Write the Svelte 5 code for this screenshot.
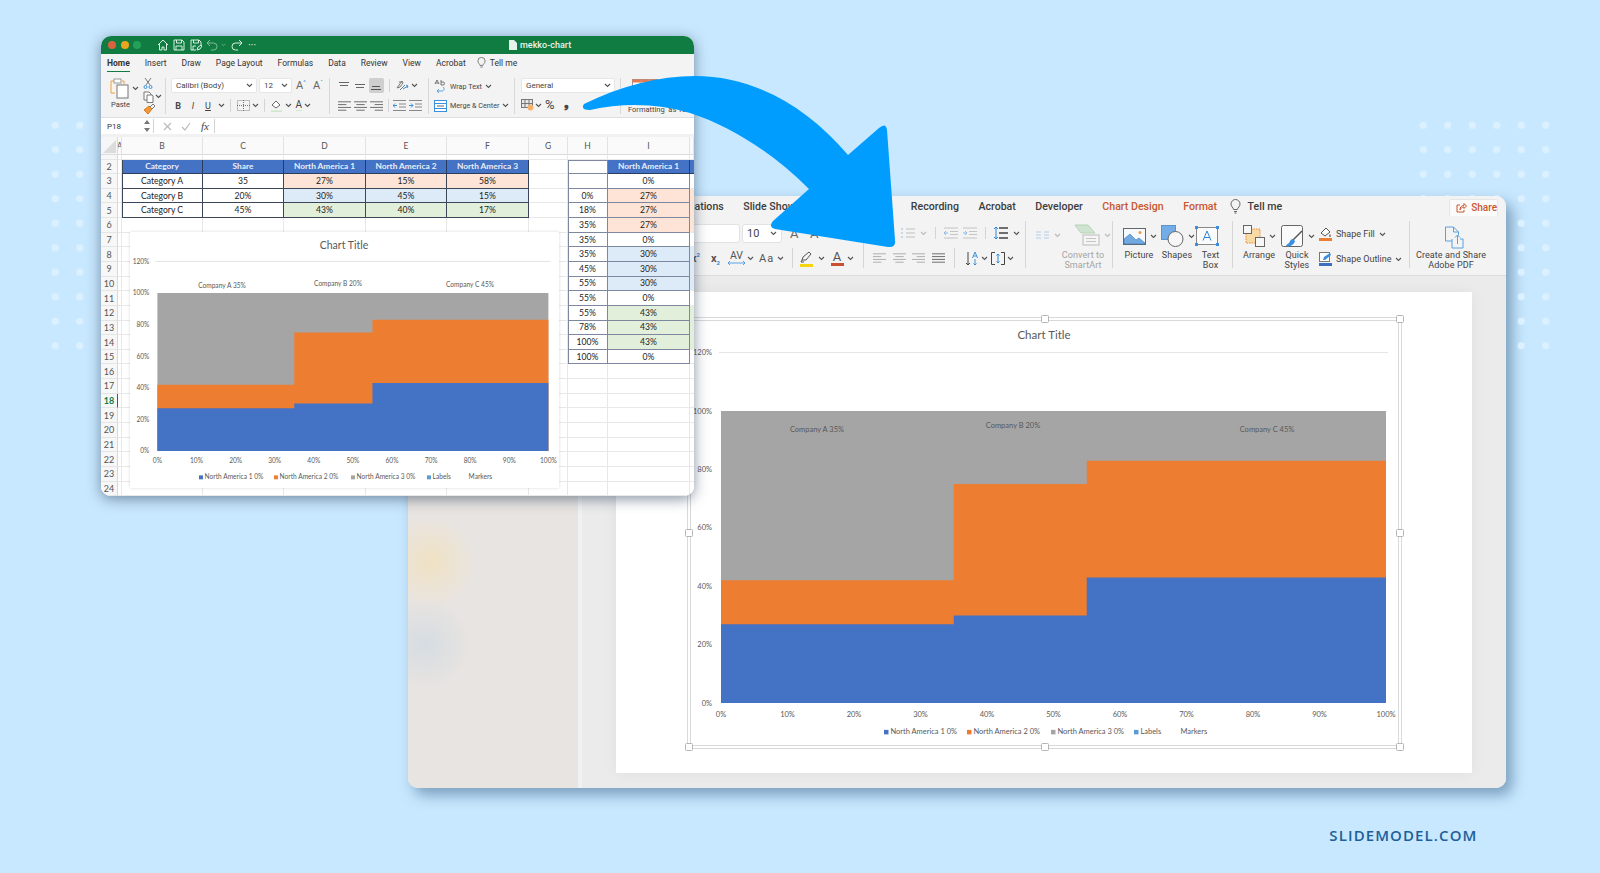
<script>
	const columns = ['A', 'B', 'C', 'D', 'E', 'F', 'G', 'H', 'I', ''];
	const head = ['North America 1', 'North America 2', 'North America 3'];

	// cells B..I for rows 2-15, [text, kind]
	const table = {
		2: [['Category', 'h'], ['Share', 'h'], [head[0], 'h'], [head[1], 'h'], [head[2], 'h'], 0, ['', 'r top'], [head[0], 'h']],
		3: [['Category A', 't'], ['35', 't'], ['27%', 't p'], ['15%', 't p'], ['58%', 't p'], 0, ['', 'r'], ['0%', 'r']],
		4: [['Category B', 't'], ['20%', 't'], ['30%', 't b'], ['45%', 't b'], ['15%', 't b'], 0, ['0%', 'r'], ['27%', 'r p']],
		5: [['Category C', 't'], ['45%', 't'], ['43%', 't g'], ['40%', 't g'], ['17%', 't g'], 0, ['18%', 'r'], ['27%', 'r p']],
		6: [0, 0, 0, 0, 0, 0, ['35%', 'r'], ['27%', 'r p']],
		7: [0, 0, 0, 0, 0, 0, ['35%', 'r'], ['0%', 'r']],
		8: [0, 0, 0, 0, 0, 0, ['35%', 'r'], ['30%', 'r b']],
		9: [0, 0, 0, 0, 0, 0, ['45%', 'r'], ['30%', 'r b']],
		10: [0, 0, 0, 0, 0, 0, ['55%', 'r'], ['30%', 'r b']],
		11: [0, 0, 0, 0, 0, 0, ['55%', 'r'], ['0%', 'r']],
		12: [0, 0, 0, 0, 0, 0, ['55%', 'r'], ['43%', 'r g']],
		13: [0, 0, 0, 0, 0, 0, ['78%', 'r'], ['43%', 'r g']],
		14: [0, 0, 0, 0, 0, 0, ['100%', 'r'], ['43%', 'r g']],
		15: [0, 0, 0, 0, 0, 0, ['100%', 'r'], ['0%', 'r']]
	};
	const rowNumbers = Array.from({ length: 23 }, (_, i) => i + 2);
	const blank = [0, 0, 0, 0, 0, 0, 0, 0];

	const blue = [[0, 27], [35, 27], [35, 30], [55, 30], [55, 43], [100, 43]];
	const orange = [[0, 42], [35, 42], [35, 75], [55, 75], [55, 83], [100, 83]];
	const percents = [0, 10, 20, 30, 40, 50, 60, 70, 80, 90, 100];
	const yPercents = [0, 20, 40, 60, 80, 100, 120];

	const smallChart = {
		w: 429, h: 256, x: 27.4, y: 61, pw: 391, ph: 158, fs: 6.6, title: 10.5, titleX: 214, titleY: 17, gap: 8, axisY: 231, legendY: 247,
		labels: [['Company A 35%', 92, 56], ['Company B 20%', 208, 54], ['Company C 45%', 340, 55]],
		legend: [[69, 'North America 1 0%', '#4472c4'], [144, 'North America 2 0%', '#ed7d31'], [221, 'North America 3 0%', '#a5a5a5'], [297, 'Labels', '#5b9bd5'], [333, 'Markers', '']]
	};
	const largeChart = {
		w: 711, h: 428, x: 32, y: 92, pw: 665, ph: 292, fs: 7.5, title: 11.5, titleX: 355, titleY: 20, gap: 9, axisY: 398, legendY: 415,
		labels: [['Company A 35%', 128, 113], ['Company B 20%', 324, 109], ['Company C 45%', 578, 113]],
		legend: [[195, 'North America 1 0%', '#4472c4'], [278, 'North America 2 0%', '#ed7d31'], [362, 'North America 3 0%', '#a5a5a5'], [445, 'Labels', '#5b9bd5'], [485, 'Markers', '']]
	};

	function steps(points, c) {
		const toXY = ([p, v]) => `${c.x + (p / 100) * c.pw},${c.y + c.ph - (v / 100) * c.ph}`;
		return [[0, 0], ...points, [100, 0]].map(toXY).join(' ');
	}

	// the fill of column I bleeds past its right border up to the window edge
	function tailFill(n) {
		const kinds = table[n]?.[7]?.[1]?.split(' ') ?? [];
		return kinds.find((k) => ['h', 'p', 'b', 'g'].includes(k)) ?? '';
	}
</script>

{#snippet chev(color = '#555')}
	<svg class="chev" viewBox="0 0 7 5"><path d="M1 1l2.500 2.500L6 1" fill="none" stroke={color} stroke-width="1.100" /></svg>
{/snippet}

{#snippet lines(mode, color = '#666')}
	<svg class="lines" viewBox="0 0 14 12">
		{#each [1, 4, 7, 10] as y, i}
			{@const w = mode === 'j' || i % 2 === 0 ? 14 : 9}
			<rect x={mode === 'l' ? 0 : mode === 'r' ? 14 - w : (14 - w) / 2} {y} width={w} height="1" fill={color} />
		{/each}
	</svg>
{/snippet}

{#snippet mekko(c)}
	<svg class="mekko" width={c.w} height={c.h} viewBox="0 0 {c.w} {c.h}" font-family="Lato, sans-serif" fill="#595959">
		<text x={c.titleX} y={c.titleY} font-size={c.title} text-anchor="middle">Chart Title</text>
		<line x1={c.x - 2} x2={c.x + c.pw + 2} y1={c.y - c.ph * 0.2} y2={c.y - c.ph * 0.2} stroke="#e4e4e4" />
		<rect x={c.x} y={c.y} width={c.pw} height={c.ph} fill="#a5a5a5" />
		<polygon points={steps(orange, c)} fill="#ed7d31" />
		<polygon points={steps(blue, c)} fill="#4472c4" />
		{#each yPercents as p}
			<text x={c.x - c.gap} y={c.y + c.ph - (p / 100) * c.ph + c.fs * 0.35} font-size={c.fs} text-anchor="end">{p}%</text>
		{/each}
		{#each percents as p}
			<text x={c.x + (p / 100) * c.pw} y={c.axisY} font-size={c.fs} text-anchor="middle">{p}%</text>
		{/each}
		{#each c.labels as [label, x, y]}
			<text {x} {y} font-size={c.fs} text-anchor="middle">{label}</text>
		{/each}
		{#each c.legend as [x, label, color]}
			{#if color}<rect {x} y={c.legendY - c.fs * 0.55} width={c.fs * 0.6} height={c.fs * 0.6} fill={color} />{/if}
			<text x={x + c.fs * 0.85} y={c.legendY} font-size={c.fs}>{label}</text>
		{/each}
	</svg>
{/snippet}

<main class="stage">
	<div class="dots dots-left"></div>
	<div class="dots dots-right"></div>
	<div class="dots dots-far"></div>

	<section class="ppt">
		<nav class="ppt-tabs">
			<span>Home</span><span>Insert</span><span>Draw</span><span>Design</span><span>Transitions</span>
			<span>Animations</span><span>Slide Show</span><span>Review</span><span>View</span><span>Recording</span>
			<span>Acrobat</span><span>Developer</span><span class="accent">Chart Design</span><span class="accent">Format</span>
			<span class="tell">
				<svg width="11" height="15" viewBox="0 0 11 15"><path d="M3.600 10.500C3.300 8.600 1 7.600 1 5a4.500 4.500 0 0 1 9 0c0 2.600-2.300 3.600-2.600 5.500zM4 12.500h3M4.500 14h2" fill="none" stroke="#666" /></svg>
				Tell me
			</span>
			<button class="share">
				<svg width="11" height="11" viewBox="0 0 11 11"><path d="M4 3H1v7h7V8M4 8c0-3 1.500-4.500 4-4.500V1.500L10.500 4 8 6.500V5C6 5 5 6 4 8z" fill="none" stroke="#c9572f" /></svg>
				Share
			</button>
		</nav>

		<div class="ppt-tools">
			<div class="pg pg-font">
				<div class="pr first">
					<span class="box name"></span>
					<span class="box size">10 {@render chev()}</span>
					<span class="big-a">A</span><span class="big-a">A</span>
				</div>
				<div class="pr second">
					<span class="sc">x<sup>2</sup></span>
					<span class="sc">x<sub>2</sub></span>
					<span class="av">AV<svg width="17" height="4" viewBox="0 0 17 4"><path d="M0 2h17M0 2l2-2M0 2l2 2M17 2l-2-2M17 2l-2 2" fill="none" stroke="#3b8fe0" stroke-width=".8" /></svg></span>
					{@render chev()}
					<span class="aa">Aa</span>
					{@render chev()}
					<i class="vr"></i>
					<svg class="marker" width="14" height="17" viewBox="0 0 14 17"><path d="M2 10l1-3 6-5 2 2-5 6zM2 10l-1 2h3" fill="none" stroke="#555" /><rect y="14" width="13" height="3" fill="#f6d40f" /></svg>
					{@render chev()}
					<span class="color-a">A</span>
					{@render chev()}
				</div>
			</div>

			<div class="pg pg-para">
				<div class="pr para-top">
					<svg class="faded" width="14" height="12" viewBox="0 0 14 12"><path d="M5 2h9M5 6h9M5 10h9" stroke="#bbb" /><path d="M1 1v2M1 5v2M1 9v2" stroke="#8bbbe8" /></svg>
					{@render chev('#bbb')}
					<i class="vr short"></i>
					<svg width="14" height="12" viewBox="0 0 14 12"><path d="M0 1h14M6 4.500h8M6 7.500h8M0 11h14" stroke="#c4c4c4" /><path d="M4 6H0M2 4L0 6l2 2" fill="none" stroke="#8bbbe8" /></svg>
					<svg width="14" height="12" viewBox="0 0 14 12"><path d="M0 1h14M6 4.500h8M6 7.500h8M0 11h14" stroke="#c4c4c4" /><path d="M0 6h4M2 4l2 2-2 2" fill="none" stroke="#8bbbe8" /></svg>
					<i class="vr short"></i>
					<svg width="14" height="14" viewBox="0 0 14 14"><path d="M5 2h9M5 7h9M5 12h9" stroke="#444" stroke-width="1.300" /><path d="M2 1v12M0 3l2-2 2 2M0 11l2 2 2-2" fill="none" stroke="#2f86d8" /></svg>
					{@render chev()}
				</div>
				<div class="pr para-bottom">
					{@render lines('l', '#aaa')}{@render lines('c', '#aaa')}{@render lines('r', '#aaa')}{@render lines('j', '#666')}
					<i class="vr"></i>
					<span class="pair">
						<svg width="14" height="15" viewBox="0 0 14 15"><path d="M3 1v13M1 12l2 2 2-2" fill="none" stroke="#444" /><path d="M7.500 7L10 1l2.500 6M8.500 5h3M10 8v6M8.500 12.500l1.500 1.500 1.500-1.500" fill="none" stroke="#2f86d8" stroke-width=".9" /></svg>
						{@render chev()}
					</span>
					<span class="pair close">
						<svg width="14" height="13" viewBox="0 0 14 13"><path d="M4 .5H.5v12H4M10 .5h3.500v12H10" fill="none" stroke="#444" /><path d="M7 2v9M5.500 3.500L7 2l1.500 1.500M5.500 9.500L7 11l1.500-1.500" fill="none" stroke="#2f86d8" /></svg>
						{@render chev()}
					</span>
				</div>
			</div>

			<div class="pg pg-smart">
				<div class="smart-top">
					<svg width="14" height="8" viewBox="0 0 14 8"><path d="M0 1h5M0 4h5M0 7h5M8 1h5M8 4h5M8 7h5" stroke="#b3cfe8" /></svg>
					{@render chev('#bbb')}
					<svg class="smart-art" width="26" height="22" viewBox="0 0 26 22"><path d="M1 1h13l7 8H7z" fill="#cfe4d0" stroke="#b6d3b8" /><rect x="9" y="11" width="16" height="10" fill="#f5f5f5" stroke="#bbb" /><path d="M12 14.500h10M12 17.500h10" stroke="#c4c4c4" /></svg>
					{@render chev('#bbb')}
				</div>
				<span class="lbl faded-text">Convert to<br />SmartArt</span>
			</div>

			<div class="pg pg-insert">
				<div class="big picture">
					<div class="big-row">
						<svg width="23" height="17" viewBox="0 0 23 17"><rect x=".5" y=".5" width="22" height="16" fill="#f7fafd" stroke="#666" /><path d="M1 16v-5l6-5 6 6 3-2 6 5v1z" fill="#72a9e0" stroke="#3b77b4" stroke-width=".6" /><circle cx="17" cy="4.500" r="1.500" fill="#f09a3a" /></svg>
						{@render chev()}
					</div>
					<span class="lbl">Picture</span>
				</div>
				<div class="big shapes">
					<div class="big-row">
						<svg width="23" height="22" viewBox="0 0 23 22"><rect x=".5" y=".5" width="14" height="14" fill="#72ade8" stroke="#5b93cd" /><circle cx="14.500" cy="14" r="7.500" fill="#f7f7f7" stroke="#666" /></svg>
						{@render chev()}
					</div>
					<span class="lbl">Shapes</span>
				</div>
				<div class="big textbox">
					<div class="big-row">
						<svg width="24" height="20" viewBox="0 0 24 20"><rect x="1.500" y="1.500" width="21" height="17" fill="#fbfbfb" stroke="#888" /><path d="M8 14.500L12 5l4 9.500M9.200 11.500h5.600" fill="none" stroke="#2f86d8" /><rect width="3" height="3" fill="#3b8fe0" /><rect x="21" width="3" height="3" fill="#3b8fe0" /><rect y="17" width="3" height="3" fill="#3b8fe0" /><rect x="21" y="17" width="3" height="3" fill="#3b8fe0" /></svg>
					</div>
					<span class="lbl">Text<br />Box</span>
				</div>
			</div>

			<div class="pg pg-arrange">
				<div class="big arrange">
					<div class="big-row">
						<svg width="22" height="22" viewBox="0 0 22 22"><rect x="3" y="4" width="14" height="14" fill="#f8dba4" stroke="#e8893a" stroke-dasharray="1.500 1" /><rect x=".5" y=".5" width="8" height="8" fill="#f7f7f7" stroke="#666" /><rect x="12.500" y="12.500" width="9" height="9" fill="#f7f7f7" stroke="#666" /></svg>
						{@render chev()}
					</div>
					<span class="lbl">Arrange</span>
				</div>
				<div class="big quick">
					<div class="big-row">
						<svg width="23" height="23" viewBox="0 0 23 23"><rect x=".5" y=".5" width="21" height="21" rx="2" fill="#fafafa" stroke="#666" /><path d="M21 6L12 15" stroke="#555" stroke-width="1.500" /><path d="M12 14c-3 0-3 3-4 4-1 .8-2 1-3 3 4 1 8-1 9-5z" fill="#3b8fe0" /></svg>
						{@render chev()}
					</div>
					<span class="lbl">Quick<br />Styles</span>
				</div>
				<div class="shape-col">
					<div class="shape-row">
						<svg width="13" height="14" viewBox="0 0 13 14"><path d="M2 6l5-5 4 4-5 4z" fill="#fff" stroke="#555" /><path d="M11 7c1 1.500 1 3 0 3s-1-1.500 0-3z" fill="#555" /><rect y="11" width="13" height="3" fill="#ed7d31" /></svg>
						<span>Shape Fill</span>{@render chev()}
					</div>
					<div class="shape-row">
						<svg width="13" height="14" viewBox="0 0 13 14"><rect x=".5" y=".5" width="10" height="9" fill="#fff" stroke="#777" /><path d="M4 8l1-3 6-4 1 2-6 5z" fill="#3b8fe0" /><rect y="11" width="13" height="3" fill="#3d6cc0" /></svg>
						<span>Shape Outline</span>{@render chev()}
					</div>
				</div>
			</div>

			<div class="pg pg-pdf">
				<svg class="pdf-icon" width="20" height="23" viewBox="0 0 20 23"><path d="M8 15H1.500V1h8l5 5v3" fill="none" stroke="#5a9fe0" /><path d="M9.500 1v5h5" fill="none" stroke="#5a9fe0" /><path d="M8 13v9h11v-9h-3M13.500 18V9M11 11.500L13.500 9l2.500 2.500" fill="none" stroke="#5a9fe0" /></svg>
				<span class="lbl">Create and Share<br />Adobe PDF</span>
			</div>
		</div>

		<div class="ppt-body">
			<aside class="thumbs"></aside>
			<div class="workspace">
				<div class="page">
					<div class="selection">
						{@render mekko(largeChart)}
						{#each ['tl', 'tm', 'tr', 'ml', 'mr', 'bl', 'bm', 'br'] as spot}
							<i class="handle {spot}"></i>
						{/each}
					</div>
				</div>
			</div>
		</div>
	</section>

	<section class="excel">
		<header class="xl-title">
			<i class="light red"></i><i class="light yellow"></i><i class="light green"></i>
			<svg class="qa first-qa" viewBox="0 0 12 12"><path d="M1 6l5-5 5 5M2.500 5v6h2.500V8h2v3h2.500V5" fill="none" stroke="#d8efe2" /></svg>
			<svg class="qa" viewBox="0 0 12 12"><path d="M1 1h8l2 2v8H1zM3.500 1v3h5V1M3 11V7h6v4" fill="none" stroke="#d8efe2" /></svg>
			<svg class="qa" viewBox="0 0 12 12"><path d="M1 1h8l2 2v3M6 11H1V1M3.500 1v3h5V1M3 11V7h3M7 11l1-3 3-2 1 1-2 3z" fill="none" stroke="#d8efe2" /></svg>
			<svg class="qa dim" viewBox="0 0 12 12"><path d="M1 4h6.500a3.500 3.500 0 0 1 0 7H5M1 4l3-3M1 4l3 3" fill="none" stroke="#7fbd9b" /></svg>
			<svg class="tiny" viewBox="0 0 7 5"><path d="M1 1l2.500 2.500L6 1" fill="none" stroke="#7fbd9b" /></svg>
			<svg class="qa" viewBox="0 0 12 12"><path d="M11 4H4.500a3.500 3.500 0 0 0 0 7H7M11 4L8 1M11 4L8 7" fill="none" stroke="#d8efe2" /></svg>
			<span class="more">···</span>
			<span class="doc">
				<svg width="8" height="10" viewBox="0 0 8 10"><path d="M0 0h5l3 3v7H0z" fill="#e6f2ea" /></svg>
				mekko-chart
			</span>
		</header>

		<nav class="xl-tabs">
			<span class="active">Home</span><span>Insert</span><span>Draw</span><span>Page Layout</span><span>Formulas</span><span>Data</span><span>Review</span><span>View</span><span>Acrobat</span>
			<span class="tell">
				<svg width="9" height="12" viewBox="0 0 11 15"><path d="M3.600 10.500C3.300 8.600 1 7.600 1 5a4.500 4.500 0 0 1 9 0c0 2.600-2.300 3.600-2.600 5.500zM4 12.500h3" fill="none" stroke="#666" /></svg>
				Tell me
			</span>
		</nav>

		<div class="xl-ribbon">
			<div class="xg xg-clip">
				<div class="paste">
					<svg width="21" height="21" viewBox="0 0 21 21"><path d="M12 3h2v3M5 15H1V3h3" fill="#fdf4e6" stroke="#e8a04a" /><rect x="4" y="1" width="7" height="4" fill="#fff" stroke="#999" /><rect x="7" y="7" width="11" height="13" fill="#fff" stroke="#777" /></svg>
					<span>Paste</span>
				</div>
				{@render chev()}
				<div class="clip-col">
					<svg width="10" height="11" viewBox="0 0 10 11"><path d="M2 0l5 7M8 0L3 7" stroke="#777" /><circle cx="2.500" cy="9" r="1.500" fill="none" stroke="#3b8fe0" /><circle cx="7.500" cy="9" r="1.500" fill="none" stroke="#3b8fe0" /></svg>
					<span class="copy"><svg width="11" height="12" viewBox="0 0 11 12"><path d="M1 1h5l2 2v6H1z" fill="#fff" stroke="#777" /><path d="M4 4h5l1 1v6.500H4z" fill="#fff" stroke="#777" /></svg>{@render chev()}</span>
					<svg width="12" height="11" viewBox="0 0 12 11"><path d="M1 6l5-4 3 3-4 5z" fill="#f09a3a" stroke="#d77a1e" /><path d="M7 3l3-3 2 2-3 3" fill="none" stroke="#777" /></svg>
				</div>
			</div>

			<div class="xg xg-font">
				<div class="xr">
					<span class="xbox fname">Calibri (Body){@render chev()}</span>
					<span class="xbox fsize">12{@render chev()}</span>
					<span class="grow">A<sup>^</sup></span><span class="shrink">A<sup>ˇ</sup></span>
				</div>
				<div class="xr font-bottom">
					<b class="fmt">B</b><em class="fmt">I</em><u class="fmt">U</u>{@render chev()}
					<i class="vr mini"></i>
					<span class="pair">
						<svg width="13" height="11" viewBox="0 0 13 11"><rect x=".5" y=".5" width="12" height="10" fill="none" stroke="#888" stroke-dasharray="1 1" /><path d="M6.500 0v11M0 5.500h13" stroke="#777" stroke-dasharray="1 1" /></svg>
						{@render chev()}
					</span>
					<i class="vr mini"></i>
					<span class="pair">
						<svg width="12" height="12" viewBox="0 0 12 12"><path d="M1 5l4-4 4 4-4 3z" fill="#fff" stroke="#666" /><rect y="10.500" width="11" height="1.500" fill="#cfe8c6" /></svg>
						{@render chev()}
					</span>
					<span class="pair">
						<span class="xcolor">A</span>
						{@render chev()}
					</span>
				</div>
			</div>

			<div class="xg xg-align">
				<div class="xr al-top">
					<svg width="12" height="8" viewBox="0 0 12 8"><path d="M1 .5h10M2 3.500h8" stroke="#666" /></svg>
					<svg width="12" height="8" viewBox="0 0 12 8"><path d="M1 2.500h10M2 5.500h8" stroke="#666" /></svg>
					<span class="selected"><svg width="12" height="8" viewBox="0 0 12 8"><path d="M2 4.500h8M1 7.500h10" stroke="#555" /></svg></span>
					<i class="vr mini"></i>
					<span class="pair">
						<svg width="13" height="12" viewBox="0 0 13 12"><path d="M1 8l5-7 1 2-3 4zM3 2h3M9 5l-5 5" fill="none" stroke="#777" /><path d="M7 9l5-3M10 5l2 1-1 2" fill="none" stroke="#3b8fe0" /></svg>
						{@render chev()}
					</span>
				</div>
				<div class="xr al-bottom">
					{@render lines('l')}{@render lines('c')}{@render lines('r')}
					<i class="vr mini"></i>
					<svg width="13" height="11" viewBox="0 0 13 11"><path d="M0 .5h13M6 4h7M6 7h7M0 10.500h13" stroke="#888" /><path d="M4 5.500H0M2 3.500l-2 2 2 2" fill="none" stroke="#3b8fe0" /></svg>
					<svg width="13" height="11" viewBox="0 0 13 11"><path d="M0 .5h13M6 4h7M6 7h7M0 10.500h13" stroke="#888" /><path d="M0 5.500h4M2 3.500l2 2-2 2" fill="none" stroke="#3b8fe0" /></svg>
				</div>
			</div>

			<div class="xg xg-wrap">
				<div class="xr wrap-row">
					<svg class="wrap-icon" width="11" height="14" viewBox="0 0 11 14"><path d="M1 5l2-4 2 4M1.500 4h3M7 1v5h2a1.500 1.500 0 0 0 0-3H7" fill="none" stroke="#555" stroke-width=".8" /><path d="M9 8c2 1 1 4-1 4H3M5 10l-2 2 2 2" fill="none" stroke="#3b8fe0" stroke-width=".8" /></svg>
					<span>Wrap Text</span>{@render chev()}
				</div>
				<div class="xr wrap-row">
					<svg width="13" height="12" viewBox="0 0 13 12"><rect x=".5" y=".5" width="12" height="11" fill="#fff" stroke="#3b8fe0" /><path d="M0 3.500h13M0 8.500h13" stroke="#3b8fe0" /><path d="M3 6h7" stroke="#666" /></svg>
					<span>Merge &amp; Center</span>{@render chev()}
				</div>
			</div>

			<div class="xg xg-num">
				<span class="xbox general">General{@render chev()}</span>
				<div class="xr num-row">
					<svg width="13" height="12" viewBox="0 0 13 12"><rect x=".5" y=".5" width="11" height="8" fill="#e8e8e8" stroke="#777" /><path d="M4 .5v8M8 .5v8M1 4.500h10" stroke="#777" /><circle cx="9.500" cy="8.500" r="3" fill="#f6b26b" /></svg>
					{@render chev()}
					<span class="pct">%</span>
					<span class="comma">❟</span>
				</div>
			</div>

			<div class="xg xg-styles">
				<svg width="26" height="12" viewBox="0 0 26 12"><rect x=".5" y=".5" width="25" height="11" fill="#fff" stroke="#999" /><rect x=".5" y=".5" width="25" height="3" fill="#e8794a" /><path d="M9 .5v11M17 .5v11" stroke="#c99" /></svg>
				<span class="fmt-label">Formatting&nbsp; as Table</span>
			</div>
		</div>

		<div class="xl-formula">
			<span class="namebox">P18
				<svg width="6" height="12" viewBox="0 0 6 12"><path d="M0 4l3-4 3 4zM0 8l3 4 3-4z" fill="#777" /></svg>
			</span>
			<i class="vr fb"></i>
			<svg class="fx-icon" width="9" height="9" viewBox="0 0 9 9"><path d="M1 1l7 7M8 1L1 8" stroke="#bbb" stroke-width="1.200" /></svg>
			<svg class="fx-icon" width="10" height="9" viewBox="0 0 10 9"><path d="M1 5l3 3 5-7" fill="none" stroke="#bbb" stroke-width="1.200" /></svg>
			<em class="fx">fx</em>
			<i class="vr fb"></i>
		</div>

		<div class="sheet">
			<div class="corner"><i></i></div>
			{#each columns as col}
				<div class="col-head">{col}</div>
			{/each}
			<div class="row-head sliver"></div>
			{#each columns as col}
				<div class="cell sliver"></div>
			{/each}
			{#each rowNumbers as n}
				<div class="row-head" class:current={n === 18}>{n}</div>
				<div class="cell"></div>
				{#each table[n] ?? blank as item, i}
					<div class="cell {item ? item[1] : ''}" class:edge={item && (i === 0 || i === 6)}>{item ? item[0] : ''}</div>
				{/each}
				<div class="cell tail {tailFill(n)}"></div>
			{/each}
		</div>

		<div class="xl-chart">{@render mekko(smallChart)}</div>
	</section>

	<svg class="arrow" width="1600" height="873" viewBox="0 0 1600 873">
		<path d="M584 104C620 86 660 76 695 76C752 76 806 105 848 155L879 128Q886 122 887 130L895 240Q896 248 888 247L775 229Q768 227 773 221L809 189C772 152 730 126 690 113C660 104 625 102 590 110Q580 110 584 104Z" fill="#009dff" />
	</svg>

	<span class="brand">SLIDEMODEL.COM</span>
</main>

<style>
	:global(body) {
		margin: 0;
		background: #c8e8ff;
	}

	.stage {
		position: relative;
		width: 1600px;
		height: 873px;
		overflow: hidden;
		background: #c8e8ff;
		font-family: Roboto, sans-serif;
		color: #444;
	}

	.dots {
		position: absolute;
		background-image: radial-gradient(circle, #dcf1ff 3.3px, transparent 4px);
		background-size: 24.5px 24.5px;
	}

	.dots-left {
		left: 42.5px;
		top: 112.5px;
		width: 49px;
		height: 245px;
	}

	.dots-right {
		left: 1410.5px;
		top: 112.5px;
		width: 147px;
		height: 98px;
	}

	.dots-far {
		left: 1508.5px;
		top: 210.5px;
		width: 49px;
		height: 147px;
	}

	i {
		font-style: normal;
		display: block;
	}

	svg {
		display: block;
		flex: none;
	}

	.chev {
		width: 7px;
		height: 5px;
	}

	.lines {
		width: 13px;
		height: 12px;
	}

	.vr {
		flex: none;
		width: 1px;
		height: 20px;
		background: #d4d4d4;
	}

	.pair {
		flex: none;
		display: flex;
		align-items: center;
		gap: 2px;
	}

	/* powerpoint window */
	.ppt {
		position: absolute;
		left: 408px;
		top: 196px;
		width: 1098px;
		height: 592px;
		display: flex;
		flex-direction: column;
		border-radius: 10px;
		overflow: hidden;
		background: #ececec;
	}

	.stage::before {
		content: '';
		position: absolute;
		left: 408px;
		top: 196px;
		width: 1098px;
		height: 592px;
		border-radius: 10px;
		box-shadow: 6px 7px 14px rgba(45, 85, 125, 0.5);
	}

	.ppt-tabs {
		height: 20px;
		flex: none;
		background: #f3f3f3;
		display: flex;
		justify-content: flex-end;
		align-items: center;
		gap: 19.5px;
		padding-right: 8px;
		font-size: 10.6px;
		font-weight: 500;
		color: #3d3d3d;
		white-space: nowrap;
	}

	.ppt-tabs .accent {
		color: #c9572f;
	}

	.tell {
		display: flex;
		align-items: center;
		gap: 7px;
		margin-left: -7px;
	}

	.share {
		all: unset;
		box-sizing: border-box;
		display: flex;
		align-items: center;
		gap: 4px;
		margin: 3px 0 0 147.5px;
		padding: 0 0 0 6px;
		height: 18px;
		width: 49px;
		background: #fbfbfb;
		border: 1px solid #e6e6e6;
		border-radius: 2px;
		font-size: 10px;
		font-weight: 500;
		color: #c9572f;
	}

	.ppt-tools {
		height: 59px;
		flex: none;
		display: flex;
		background: #f3f3f3;
		border-bottom: 1px solid #dcdcdc;
		font-size: 9px;
	}

	.pg {
		flex: none;
		position: relative;
		box-sizing: border-box;
		margin-top: 5px;
		height: 47px;
		border-left: 1px solid #d6d6d6;
	}

	.pr {
		display: flex;
		align-items: center;
	}

	.pg-font {
		width: 455px;
		border-left: 0;
		padding-left: 232px;
	}

	.pr.first {
		gap: 2px;
		height: 20px;
		margin-top: 2px;
	}

	.box {
		box-sizing: border-box;
		display: flex;
		align-items: center;
		justify-content: space-between;
		height: 19px;
		background: #fff;
		border: 1px solid #e2e2e2;
		border-radius: 3px;
		padding: 0 4px;
		font-size: 11px;
	}

	.name {
		width: 100px;
	}

	.size {
		width: 40px;
	}

	.big-a {
		margin-left: 6px;
		width: 12px;
		font-size: 13px;
		color: #666;
	}

	.pr.second {
		margin: 5px 0 0 51px;
		height: 20px;
		width: max-content;
		font-size: 11px;
		color: #555;
	}

	.sc {
		flex: none;
		width: 15px;
		margin-right: 5px;
		font-weight: 700;
		font-size: 11px;
	}

	.sc + .sc {
		margin-right: 2px;
	}

	.sc sup,
	.sc sub {
		font-size: 6px;
		color: #2f86d8;
		line-height: 0;
	}

	.av {
		flex: none;
		width: 17px;
		margin-right: 2px;
		display: flex;
		flex-direction: column;
		align-items: center;
		font-size: 10.5px;
		line-height: 10px;
	}

	.aa {
		flex: none;
		width: 16px;
		font-size: 11px;
		letter-spacing: 1px;
		margin: 0 2px 0 5px;
	}

	.pr.second .vr {
		margin: 0 7px 0 7.5px;
	}

	.marker {
		margin-right: 4px;
	}

	.color-a {
		flex: none;
		margin: 0 3px 0 6px;
		font-size: 13px;
		line-height: 13px;
		border-bottom: 3px solid #c9502e;
		width: 13px;
		text-align: center;
	}

	.pg-para {
		width: 162px;
	}

	.para-top {
		gap: 5px;
		height: 20px;
		margin-top: 2px;
		padding-left: 37px;
	}

	.vr.short {
		height: 12px;
		margin: 0 3px;
	}

	.faded {
		opacity: 0.9;
	}

	.para-bottom {
		gap: 6.5px;
		height: 20px;
		margin-top: 5px;
		padding-left: 9px;
	}

	.para-bottom .vr {
		margin: 0 3px;
	}

	.para-bottom .close {
		margin-left: -3px;
	}

	.pg-smart {
		width: 87px;
		display: flex;
		flex-direction: column;
		align-items: flex-start;
		padding-left: 10px;
	}

	.smart-top {
		display: flex;
		align-items: center;
		gap: 4px;
		height: 26px;
		margin-top: 1px;
		flex: none;
	}

	.smart-art {
		margin-left: 9px;
	}

	.lbl {
		display: block;
		flex: none;
		text-align: center;
		line-height: 9.5px;
		font-size: 9px;
		color: #444;
		letter-spacing: 0.1px;
	}

	.faded-text {
		color: #a3a3a3;
		margin: 3px 0 0 25px;
		width: 44px;
	}

	.pg-insert {
		width: 120px;
		display: flex;
		padding-left: 10px;
	}

	.big {
		flex: none;
		display: flex;
		flex-direction: column;
		align-items: flex-start;
		height: 100%;
	}

	.big-row {
		flex: none;
		display: flex;
		align-items: center;
		gap: 4px;
		height: 30px;
	}

	.big .lbl {
		width: 32px;
		margin-top: 0;
	}

	.picture {
		width: 38px;
	}

	.shapes {
		width: 33.5px;
	}

	.textbox {
		width: 30px;
	}

	.pg-arrange {
		width: 177px;
		display: flex;
		padding-left: 10px;
	}

	.arrange {
		width: 38px;
	}

	.quick {
		width: 38px;
	}

	.shape-col {
		display: flex;
		flex-direction: column;
		gap: 11px;
		margin-top: 6px;
	}

	.shape-row {
		display: flex;
		align-items: center;
		gap: 4px;
		font-size: 9px;
		height: 14px;
	}

	.pg-pdf {
		width: 97px;
		display: flex;
		flex-direction: column;
		align-items: center;
		padding: 5px 14px 0 0;
		gap: 2px;
	}

	.pdf-icon {
		margin-left: 6px;
	}

	.ppt-body {
		flex: 1;
		display: flex;
		min-height: 0;
	}

	.thumbs {
		width: 170px;
		background:
			radial-gradient(circle at 22px 286px, rgba(244, 224, 176, 0.62), transparent 46px),
			radial-gradient(circle at 17px 368px, rgba(205, 217, 226, 0.7), transparent 46px),
			#e8e4e1;
		border-right: 4px solid #f1f1f1;
	}

	.workspace {
		flex: 1;
		padding: 16px 34px 15px 34px;
		background: #ebebeb;
	}

	.page {
		height: 481px;
		background: #fff;
		box-shadow: 0 0 14px rgba(0, 0, 0, 0.05);
		padding: 27px 0 0 73px;
		box-sizing: border-box;
	}

	.selection {
		position: relative;
		width: 711px;
		height: 428px;
		outline: 4px double #d9d9d9;
		outline-offset: -2px;
	}

	.handle {
		position: absolute;
		width: 6px;
		height: 6px;
		background: #fff;
		border: 1px solid #b5b5b5;
		border-radius: 1.5px;
		transform: translate(-4px, -4px);
	}

	.tl, .tm, .tr {
		top: 0;
	}

	.ml, .mr {
		top: 50%;
	}

	.bl, .bm, .br {
		top: 100%;
	}

	.tl, .ml, .bl {
		left: 0;
	}

	.tm, .bm {
		left: 50%;
	}

	.tr, .mr, .br {
		left: 100%;
	}

	/* excel window */
	.excel {
		position: absolute;
		left: 101px;
		top: 36px;
		width: 593px;
		height: 460px;
		display: flex;
		flex-direction: column;
		border-radius: 10px;
		overflow: hidden;
		background: #fff;
		font-size: 9px;
		color: #444;
	}

	.stage::after {
		content: '';
		position: absolute;
		left: 101px;
		top: 36px;
		width: 593px;
		height: 460px;
		border-radius: 10px;
		box-shadow: 0 3px 14px rgba(40, 60, 85, 0.55);
		z-index: 0;
	}

	.xl-title {
		height: 18px;
		flex: none;
		display: flex;
		align-items: center;
		background: #107c41;
		color: #e8f3ec;
		padding-left: 7px;
		position: relative;
	}

	.light {
		flex: none;
		width: 8px;
		height: 8px;
		border-radius: 50%;
		margin-right: 4.5px;
	}

	.red {
		background: #d9633f;
	}

	.yellow {
		background: #e9a61d;
	}

	.green {
		background: #23a05a;
	}

	.qa {
		width: 12px;
		height: 12px;
		margin-right: 4.3px;
	}

	.first-qa {
		margin-left: 11.5px;
	}

	.dim {
		margin-right: 3px;
	}

	.tiny {
		width: 5px;
		height: 4px;
		margin-right: 5px;
	}

	.more {
		font-size: 10px;
		margin-left: 1px;
	}

	.doc {
		position: absolute;
		left: 408px;
		display: flex;
		align-items: center;
		gap: 3px;
		font-weight: 500;
		font-size: 9px;
	}

	.xl-tabs {
		height: 18px;
		flex: none;
		display: flex;
		align-items: center;
		gap: 15px;
		padding-left: 6px;
		background: #f3f3f3;
		font-size: 8.5px;
		color: #333;
	}

	.xl-tabs .active {
		font-weight: 700;
		position: relative;
	}

	.xl-tabs .active::after {
		content: '';
		position: absolute;
		left: 0;
		right: 0;
		bottom: -4px;
		height: 1.5px;
		background: #107c41;
	}

	.xl-tabs .tell {
		gap: 4px;
		margin-left: -4px;
	}

	.xl-ribbon {
		height: 46px;
		flex: none;
		display: flex;
		background: #f3f3f3;
		border-bottom: 1px solid #dedede;
		box-sizing: border-box;
		overflow: hidden;
		font-size: 8px;
	}

	.xg {
		flex: none;
		box-sizing: border-box;
		margin-top: 6px;
		height: 36px;
		border-left: 1px solid #d8d8d8;
	}

	.xr {
		display: flex;
		align-items: center;
		width: max-content;
	}

	.xg-clip {
		width: 64px;
		border-left: 0;
		display: flex;
		align-items: flex-start;
		padding-left: 9px;
		gap: 1px;
	}

	.xg-clip > .chev {
		margin-top: 8px;
	}

	.paste {
		display: flex;
		flex-direction: column;
		align-items: center;
		gap: 1px;
		width: 21px;
		font-size: 7.5px;
	}

	.clip-col {
		display: flex;
		flex-direction: column;
		gap: 1.5px;
		margin: 0 0 0 3px;
		align-items: flex-start;
	}

	.copy {
		display: flex;
		align-items: center;
		gap: 1px;
	}

	.xg-font {
		width: 164px;
		padding-left: 5px;
	}

	.xbox {
		box-sizing: border-box;
		flex: none;
		height: 15px;
		display: flex;
		align-items: center;
		justify-content: space-between;
		background: #fff;
		border: 1px solid #e6e6e6;
		border-radius: 2px;
		padding: 0 3px 0 4px;
		font-size: 8px;
		color: #444;
	}

	.fname {
		width: 86px;
	}

	.fsize {
		width: 33px;
		margin-left: 2px;
	}

	.grow,
	.shrink {
		font-size: 11px;
		margin-left: 4px;
		width: 13px;
		color: #666;
	}

	.grow sup,
	.shrink sup {
		font-size: 6px;
		color: #3b8fe0;
		line-height: 0;
	}

	.font-bottom {
		margin: 6px 0 0 1.5px;
		gap: 4px;
		font-size: 9px;
	}

	.fmt {
		flex: none;
		width: 11px;
		text-align: center;
	}

	.vr.mini {
		height: 13px;
		margin: 0 1.5px;
	}

	.xcolor {
		font-size: 10px;
		line-height: 10px;
		border-bottom: 1.5px solid #cfe8c6;
	}

	.xg-align {
		width: 99px;
		padding-left: 8px;
	}

	.al-top {
		gap: 4px;
		height: 15px;
	}

	.selected {
		flex: none;
		width: 15px;
		height: 15px;
		margin-left: -1.5px;
		display: flex;
		align-items: center;
		justify-content: center;
		background: #cfcfcf;
		border-radius: 2px;
	}

	.al-bottom {
		gap: 3px;
		margin-top: 6px;
	}

	.xg-wrap {
		width: 86px;
		padding: 1px 0 0 5px;
		display: flex;
		flex-direction: column;
		gap: 5.5px;
	}

	.wrap-row {
		gap: 3px;
		font-size: 7.2px;
		height: 14px;
	}

	.wrap-icon {
		margin-right: 2px;
	}

	.xg-num {
		width: 106px;
		padding-left: 6px;
	}

	.general {
		width: 94px;
	}

	.num-row {
		gap: 1px;
		margin-top: 5px;
	}

	.pct {
		font-size: 13px;
		line-height: 14px;
		margin-left: 2px;
	}

	.comma {
		font-size: 12px;
		line-height: 12px;
		font-weight: 700;
		margin: -4px 0 0 8px;
	}

	.xg-styles {
		flex: 1;
		padding: 1px 0 0 11px;
		white-space: nowrap;
	}

	.fmt-label {
		display: block;
		margin: 14px 0 0 -4px;
		font-size: 7.5px;
		line-height: 9px;
	}

	.xl-formula {
		height: 19px;
		flex: none;
		display: flex;
		align-items: center;
		background: #fff;
		border-bottom: 3px solid #f1f1f1;
		box-sizing: border-box;
		font-size: 8px;
	}

	.namebox {
		width: 52px;
		display: flex;
		justify-content: space-between;
		align-items: center;
		box-sizing: border-box;
		padding: 0 3px 0 6px;
		color: #333;
	}

	.vr.fb {
		height: 14px;
	}

	.fx-icon {
		margin-left: 9px;
	}

	.fx {
		font-family: 'Liberation Serif', serif;
		font-size: 11px;
		margin: 0 5px 0 10px;
	}

	.sheet {
		flex: 1;
		display: grid;
		grid-template-columns: 17px 4px 81px 81px 82px 81px 82px 39px 40px 82px 4px;
		grid-template-rows: 18px 4.5px repeat(23, 14.65px);
		font-family: Lato, sans-serif;
		font-size: 8.6px;
		color: #222;
		background: #fff;
		overflow: hidden;
	}

	.corner {
		background: #f6f6f6;
		border-right: 1px solid #dcdcdc;
		border-bottom: 1px solid #dcdcdc;
		position: relative;
	}

	.corner i {
		position: absolute;
		right: 1px;
		bottom: 1px;
		border-left: 13px solid transparent;
		border-bottom: 13px solid #dcdcdc;
	}

	.col-head {
		display: flex;
		align-items: center;
		justify-content: center;
		background: #fafafa;
		border-right: 1px solid #e3e3e3;
		border-bottom: 1px solid #dcdcdc;
		color: #555;
		font-size: 8.5px;
		overflow: hidden;
	}

	.row-head {
		display: flex;
		align-items: center;
		justify-content: center;
		background: #f7f7f7;
		border-right: 1px solid #d8d8d8;
		border-bottom: 1px solid #e5e5e5;
		color: #555;
		font-size: 9px;
	}

	.row-head.current {
		color: #107c41;
		font-weight: 700;
		border-right: 1.5px solid #107c41;
	}

	.cell {
		box-sizing: border-box;
		display: flex;
		align-items: center;
		justify-content: center;
		border-right: 1px solid #e8e8e8;
		border-bottom: 1px solid #e8e8e8;
		white-space: nowrap;
		overflow: hidden;
	}

	.cell.h {
		background: #4472c4;
		color: #e8effa;
		font-weight: 700;
		font-size: 8.3px;
		border-color: #2b3d5c;
	}

	.cell.t {
		border-color: #3b4658;
	}

	.cell.r {
		border-color: #7d88a0;
	}

	.cell.top {
		box-shadow: inset 0 1px 0 #7d88a0;
	}

	.cell.edge {
		box-shadow: inset 1px 0 0 #3b4658;
	}

	.cell.r.edge {
		box-shadow: inset 1px 0 0 #7d88a0;
	}

	.cell.r.top.edge {
		box-shadow: inset 1px 1px 0 #7d88a0;
	}

	.cell.p {
		background: #fde4d6;
	}

	.cell.b {
		background: #ddeaf7;
	}

	.cell.g {
		background: #e2efda;
	}

	.cell.tail {
		border-right: 0;
	}

	.xl-chart {
		position: absolute;
		left: 29px;
		top: 196px;
		width: 429px;
		height: 256px;
		background: #fff;
		box-shadow: 0 0 3px rgba(0, 0, 0, 0.15);
	}

	.mekko {
		display: block;
	}

	.excel,
	.arrow,
	.brand {
		z-index: 1;
	}

	.arrow {
		position: absolute;
		left: 0;
		top: 0;
		pointer-events: none;
	}

	.brand {
		position: absolute;
		right: 122.5px;
		top: 825px;
		font-family: 'Open Sans', sans-serif;
		font-size: 15px;
		font-weight: 600;
		letter-spacing: 1.1px;
		color: #1d5f98;
	}
</style>
